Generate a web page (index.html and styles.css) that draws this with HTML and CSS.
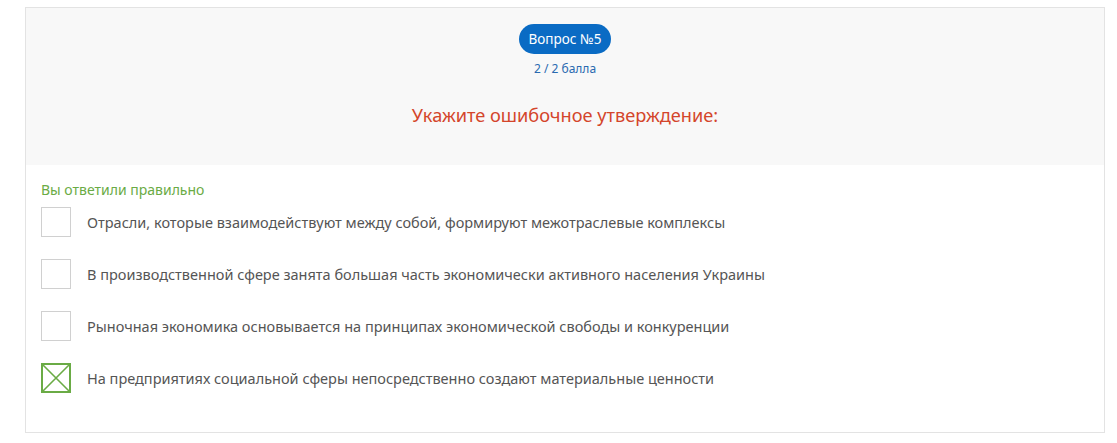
FILE: index.html
```html
<!DOCTYPE html>
<html lang="ru">
<head>
<meta charset="utf-8">
<link rel="stylesheet" href="styles.css">
</head>
<body>
<div class="card">
  <div class="head">
    <span class="badge">Вопрос №5</span>
    <div class="score">2 / 2 балла</div>
    <div class="question">Укажите ошибочное утверждение:</div>
  </div>
  <div class="body">
    <div class="result">Вы ответили правильно</div>
    <div class="opt"><span class="box"></span><span class="label">Отрасли, которые взаимодействуют между собой, формируют межотраслевые комплексы</span></div>
    <div class="opt"><span class="box"></span><span class="label">В производственной сфере занята большая часть экономически активного населения Украины</span></div>
    <div class="opt"><span class="box"></span><span class="label">Рыночная экономика основывается на принципах экономической свободы и конкуренции</span></div>
    <div class="opt"><span class="box checked"><svg width="30" height="30" viewBox="0 0 30 30"><path d="M2 2 L28 28 M28 2 L2 28" stroke="#6aab45" stroke-width="1.6" fill="none"/></svg></span><span class="label">На предприятиях социальной сферы непосредственно создают материальные ценности</span></div>
  </div>
</div>
</body>
</html>
```
FILE: styles.css
```css
* { box-sizing: border-box; }
html, body { margin: 0; padding: 0; background: #fff; }
body {
  font-family: "Noto Sans", "Open Sans", sans-serif;
  padding: 7px 12px 0 25px;
}
.card {
  width: 1080px;
  height: 426px;
  border: 1px solid #e3e3e3;
  background: #fff;
}
.head {
  background: #f8f8f8;
  height: 157px;
  display: flex;
  flex-direction: column;
  align-items: center;
  padding-top: 16px;
}
.badge {
  display: inline-block;
  background: #0a6bc4;
  color: #fff;
  font-size: 13.5px;
  line-height: 30px;
  height: 30px;
  padding: 0 10px;
  border-radius: 15px;
}
.score {
  color: #2a6ab0;
  font-size: 12px;
  margin-top: 6px;
  line-height: 18px;
}
.question {
  color: #d4452b;
  font-size: 18.2px;
  margin-top: 25px;
  line-height: 24px;
}
.body {
  padding: 15px 15px 0 15px;
}
.result {
  color: #6aab45;
  font-size: 14px;
  line-height: 20px;
  margin-bottom: 7px;
}
.opt {
  display: flex;
  align-items: center;
  height: 30px;
  margin-bottom: 22px;
}
.box {
  width: 30px;
  height: 30px;
  border: 1px solid #d0d0d0;
  flex: none;
  margin-right: 16px;
  background: #fff;
}
.box.checked {
  border: 2px solid #6aab45;
  position: relative;
}
.box.checked svg {
  position: absolute;
  left: -2px;
  top: -2px;
}
.label {
  color: #555;
  font-size: 14.5px;
}
```
